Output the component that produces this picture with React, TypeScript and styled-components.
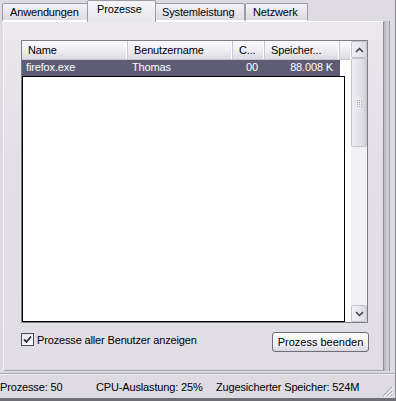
import styled, { createGlobalStyle } from 'styled-components'

const GlobalStyle = createGlobalStyle`
  html, body {
    margin: 0;
    padding: 0;
    background: #dcdae0;
  }
  * {
    box-sizing: border-box;
  }
`

const Window = styled.div`
  position: relative;
  width: 396px;
  height: 401px;
  display: flex;
  flex-direction: column;
  background: #dddbe1;
  font-family: 'Liberation Sans', Arial, sans-serif;
  font-size: 11px;
  letter-spacing: -0.15px;
  color: #000;
  overflow: hidden;
  border-right: 1px solid #8d8b93;
  border-bottom: 3px solid #6f6d75;
`

const TabRow = styled.div`
  display: flex;
  align-items: flex-end;
  height: 21px;
  padding-left: 2px;
  position: relative;
  z-index: 1;
`

const Tab = styled.div<{ active?: boolean; w: number }>`
  width: ${(p) => p.w}px;
  height: ${(p) => (p.active ? 22 : 18)}px;
  margin: ${(p) => (p.active ? '0 -2px -1px' : '0')};
  padding: ${(p) => (p.active ? '2px 0 0 9px' : '2px 0 0 7px')};
  border: 1px solid #9c9aa3;
  border-bottom: ${(p) => (p.active ? 'none' : '1px solid #fff')};
  border-radius: 2px 2px 0 0;
  background: ${(p) =>
    p.active
      ? 'linear-gradient(#f4f3f7, #e9e7ec)'
      : 'linear-gradient(#f2f1f5, #dedce3)'};
  position: relative;
  z-index: ${(p) => (p.active ? 2 : 1)};
  white-space: nowrap;
`

const Panel = styled.div`
  margin: 0 11px 0 3px;
  height: 350px;
  border-top: 1px solid #fff;
  border-left: 1px solid #f4f3f6;
  border-right: 1px solid #8e8c95;
  border-bottom: 1px solid #a3a1a9;
  background: linear-gradient(#ebe9ee, #e2e0e6 40%, #e0dee4);
  padding: 18px 15px 0 17px;
  display: flex;
  flex-direction: column;
  box-shadow: 2px 0 0 #bdbbc2, 5px 0 0 #cfcdd4, 6px 0 0 #9e9ca4;
`

const ListBox = styled.div`
  height: 283px;
  display: flex;
  border: 1px solid #7f7d87;
  background: #fff;
`

const ListArea = styled.div`
  flex: 1;
  display: flex;
  flex-direction: column;
`

const HeaderRow = styled.div`
  display: flex;
  height: 19px;
  background: linear-gradient(#fbfbfd, #ecebf0 60%, #dcdae1);
  border-bottom: 1px solid #c9c7ce;
`

const HeaderCell = styled.div<{ w: number }>`
  width: ${(p) => p.w}px;
  padding: 3px 0 0 6px;
  border-right: 1px solid #cac8cf;
  box-shadow: inset -1px 0 0 #fff;
  white-space: nowrap;
  overflow: hidden;
`

const HeaderFill = styled.div`
  flex: 1;
`

const Row = styled.div`
  display: flex;
  height: 16px;
  width: 318px;
  background: #5d5c72;
  color: #fff;
`

const Cell = styled.div<{ w: number; right?: boolean }>`
  width: ${(p) => p.w}px;
  padding: ${(p) => (p.right ? '1px 7px 0 0' : '1px 0 0 4px')};
  text-align: ${(p) => (p.right ? 'right' : 'left')};
  white-space: nowrap;
`

const FocusFrame = styled.div`
  flex: 1;
  margin-right: 5px;
  border: 1px solid #000;
  background: #fff;
`

const ScrollBar = styled.div`
  width: 17px;
  display: flex;
  flex-direction: column;
  background: #efeef3;
  border-left: 1px solid #fff;
`

const ScrollButton = styled.div`
  height: 17px;
  display: flex;
  align-items: center;
  justify-content: center;
  background: linear-gradient(90deg, #f1f0f5, #dcdae2);
  border: 1px solid #c4c2cb;
  border-radius: 2px;
`

const Thumb = styled.div`
  height: 89px;
  display: flex;
  align-items: center;
  justify-content: center;
  background: linear-gradient(90deg, #eeedf2, #e1dfe6 70%, #cfcdd5);
  border: 1px solid #c4c2cb;
  border-radius: 2px;
`

const Track = styled.div`
  flex: 1;
  background: #f1f0f4;
`

const Controls = styled.div`
  display: flex;
  justify-content: space-between;
  align-items: flex-start;
  margin-top: 9px;
`

const CheckLabel = styled.label`
  display: flex;
  align-items: center;
  gap: 3px;
  padding-top: 1px;
`

const CheckBox = styled.span`
  width: 13px;
  height: 13px;
  border: 1px solid #4b4a58;
  background: linear-gradient(135deg, #e6e5ec, #fdfdfe);
  display: flex;
  align-items: center;
  justify-content: center;
`

const Button = styled.button`
  font: inherit;
  width: 97px;
  height: 20px;
  padding: 0;
  margin-right: -1px;
  border: 1px solid #6f6d78;
  border-radius: 3px;
  background: linear-gradient(#fefefe, #f1f0f4 60%, #d9d7de);
  color: #000;
`

const StatusBar = styled.div`
  flex: 1;
  margin-top: 2px;
  border-top: 1px solid #a9a7ae;
  box-shadow: inset 0 1px 0 #f3f2f5;
  display: flex;
  align-items: center;
  padding: 2px 0 0 0;
  position: relative;
`

const StatusItem = styled.span<{ w: number }>`
  width: ${(p) => p.w}px;
  white-space: nowrap;
`

const Grip = styled.svg`
  position: absolute;
  right: 2px;
  bottom: 1px;
`

const UpArrow = () => (
  <svg width="9" height="6" viewBox="0 0 9 6">
    <path d="M1 5 L4.5 1.5 L8 5" fill="none" stroke="#3c3b48" strokeWidth="1.5" />
  </svg>
)

const DownArrow = () => (
  <svg width="9" height="6" viewBox="0 0 9 6">
    <path d="M1 1 L4.5 4.5 L8 1" fill="none" stroke="#3c3b48" strokeWidth="1.5" />
  </svg>
)

const GripDots = () => (
  <svg width="8" height="8" viewBox="0 0 8 8">
    {[0, 2, 4, 6].map((y) =>
      [1, 3, 5].map((x) => (
        <rect key={`${x}-${y}`} x={x} y={y} width="1" height="1" fill="#fff" />
      ))
    )}
    {[1, 3, 5, 7].map((y) =>
      [2, 4, 6].map((x) => (
        <rect key={`d${x}-${y}`} x={x} y={y} width="1" height="1" fill="#b4b2bb" />
      ))
    )}
  </svg>
)

const columns = [
  { label: 'Name', w: 106 },
  { label: 'Benutzername', w: 105 },
  { label: 'C...', w: 32 },
  { label: 'Speicher...', w: 75 },
]

export default function App() {
  return (
    <Window>
      <GlobalStyle />
      <TabRow>
        <Tab w={87}>Anwendungen</Tab>
        <Tab w={69} active>
          Prozesse
        </Tab>
        <Tab w={91}>Systemleistung</Tab>
        <Tab w={63}>Netzwerk</Tab>
      </TabRow>
      <Panel>
        <ListBox>
          <ListArea>
            <HeaderRow>
              {columns.map((c) => (
                <HeaderCell key={c.label} w={c.w}>
                  {c.label}
                </HeaderCell>
              ))}
              <HeaderFill />
            </HeaderRow>
            <Row>
              <Cell w={106}>firefox.exe</Cell>
              <Cell w={105}>Thomas</Cell>
              <Cell w={32} right>
                00
              </Cell>
              <Cell w={75} right>
                88.008 K
              </Cell>
            </Row>
            <FocusFrame />
          </ListArea>
          <ScrollBar>
            <ScrollButton>
              <UpArrow />
            </ScrollButton>
            <Thumb>
              <GripDots />
            </Thumb>
            <Track />
            <ScrollButton>
              <DownArrow />
            </ScrollButton>
          </ScrollBar>
        </ListBox>
        <Controls>
          <CheckLabel>
            <CheckBox>
              <svg width="9" height="9" viewBox="0 0 9 9">
                <path d="M1 4.5 L3.5 7 L8 1.5" fill="none" stroke="#2c2b38" strokeWidth="1.8" />
              </svg>
            </CheckBox>
            Prozesse aller Benutzer anzeigen
          </CheckLabel>
          <Button>Prozess beenden</Button>
        </Controls>
      </Panel>
      <StatusBar>
        <StatusItem w={96}>Prozesse: 50</StatusItem>
        <StatusItem w={120}>CPU-Auslastung: 25%</StatusItem>
        <StatusItem w={170}>Zugesicherter Speicher: 524M</StatusItem>
        <Grip width="12" height="12" viewBox="0 0 12 12">
          <path d="M11 2 L2 11 M11 6 L6 11 M11 10 L10 11" stroke="#a5a3ab" strokeWidth="1" />
          <path d="M12 3 L3 12 M12 7 L7 12" stroke="#fff" strokeWidth="1" />
        </Grip>
      </StatusBar>
    </Window>
  )
}
